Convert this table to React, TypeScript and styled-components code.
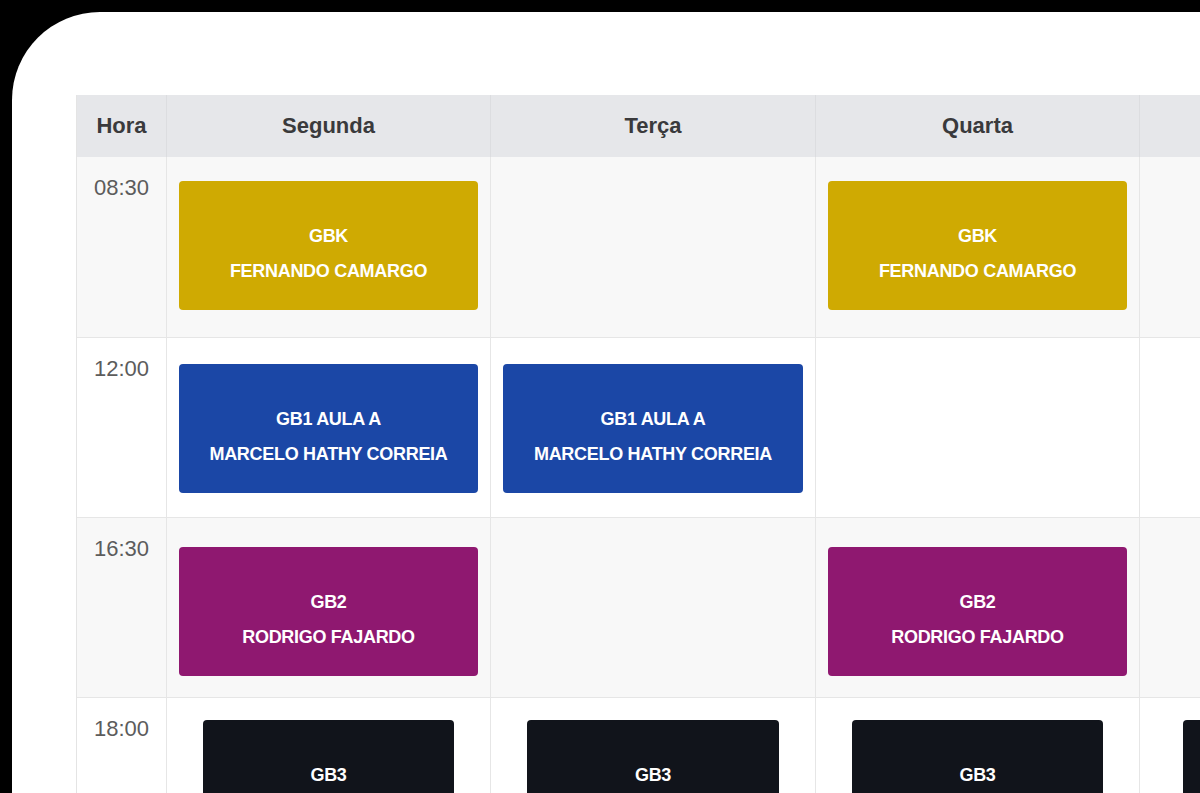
import React from 'react';
import styled, { createGlobalStyle } from 'styled-components';

const GlobalStyle = createGlobalStyle`
  html, body {
    margin: 0;
    padding: 0;
    background: #000;
    overflow: hidden;
  }
  body {
    font-family: 'Liberation Sans', Arial, sans-serif;
  }
`;

/** tela branca com o canto arredondado */
const Screen = styled.div`
  background: #fff;
  border-top-left-radius: 88px;
  box-sizing: border-box;
  height: 900px;
  margin: 12px 0 0 12px;
  padding: 83px 0 0 64px;
  width: 1400px;
`;

/** grade de horários */
const Schedule = styled.div`
  border-left: 1px solid #e4e4e4;
  display: grid;
  grid-template-columns: 90px 324px 325px 324px 324px 324px;
  grid-template-rows: 62px 181px 180px 180px auto;
`;

const HeadCell = styled.div`
  align-items: center;
  background: #e6e7ea;
  border-right: 1px solid #dcdde0;
  box-sizing: border-box;
  color: #3a3a3c;
  display: flex;
  font-size: 22px;
  font-weight: 700;
  justify-content: center;
`;

const TimeCell = styled.div<{ $striped: boolean }>`
  background: ${(p) => (p.$striped ? '#f8f8f8' : '#fff')};
  border-bottom: 1px solid #e6e6e6;
  border-right: 1px solid #e6e6e6;
  box-sizing: border-box;
  color: #5c5c5c;
  font-size: 22px;
  padding-top: 18px;
  text-align: center;
`;

const SlotCell = styled.div<{ $striped: boolean; $top: number; $side: number }>`
  background: ${(p) => (p.$striped ? '#f8f8f8' : '#fff')};
  border-bottom: 1px solid #e6e6e6;
  border-right: 1px solid #e6e6e6;
  box-sizing: border-box;
  padding: ${(p) => `${p.$top}px ${p.$side}px 0`};
`;

const ClassCard = styled.div<{ $color: string }>`
  align-items: center;
  background: ${(p) => p.$color};
  border-radius: 4px;
  box-sizing: border-box;
  color: #fff;
  display: flex;
  flex-direction: column;
  font-size: 18px;
  font-weight: 700;
  gap: 14px;
  height: 129px;
  justify-content: center;
  letter-spacing: -0.3px;
  padding-top: 16px;
  text-align: center;
`;

const CardLine = styled.span`
  line-height: 21px;
  white-space: nowrap;
`;

type Turma = { name: string; teacher: string; color: string };

const GBK: Turma = { name: 'GBK', teacher: 'FERNANDO CAMARGO', color: '#cfaa02' };
const GB1: Turma = { name: 'GB1 AULA A', teacher: 'MARCELO HATHY CORREIA', color: '#1b47a6' };
const GB2: Turma = { name: 'GB2', teacher: 'RODRIGO FAJARDO', color: '#8f1870' };
const GB3: Turma = { name: 'GB3', teacher: 'RODRIGO FAJARDO', color: '#11141b' };

const days = ['Segunda', 'Terça', 'Quarta', 'Quinta', 'Sexta'];

const rows: { time: string; top: number; side: number[]; slots: (Turma | null)[] }[] = [
  { time: '08:30', top: 24, side: [12, 12, 12, 12, 12], slots: [GBK, null, GBK, null, null] },
  { time: '12:00', top: 26, side: [12, 12, 12, 12, 12], slots: [GB1, GB1, null, null, null] },
  { time: '16:30', top: 29, side: [12, 12, 12, 12, 12], slots: [GB2, null, GB2, null, null] },
  { time: '18:00', top: 22, side: [36, 36, 36, 43, 36], slots: [GB3, GB3, GB3, GB3, null] },
];

export default function App() {
  return (
    <>
      <GlobalStyle />
      <Screen>
        <Schedule>
          <HeadCell>Hora</HeadCell>
          {days.map((d) => (
            <HeadCell key={d}>{d}</HeadCell>
          ))}
          {rows.map((row, r) => (
            <React.Fragment key={row.time}>
              <TimeCell $striped={r % 2 === 0}>{row.time}</TimeCell>
              {row.slots.map((slot, i) => (
                <SlotCell key={i} $striped={r % 2 === 0} $top={row.top} $side={row.side[i]}>
                  {slot && (
                    <ClassCard $color={slot.color}>
                      <CardLine>{slot.name}</CardLine>
                      <CardLine>{slot.teacher}</CardLine>
                    </ClassCard>
                  )}
                </SlotCell>
              ))}
            </React.Fragment>
          ))}
        </Schedule>
      </Screen>
    </>
  );
}
